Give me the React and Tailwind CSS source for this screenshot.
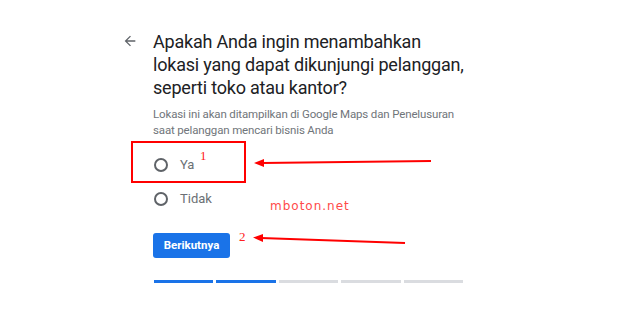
import React from 'react';

const steps = [true, true, false, false, false];

const Radio = ({ label }) => (
    <label className="flex items-center h-[34px] cursor-pointer">
        <span className="w-[14px] h-[14px] rounded-full border-2 border-[#5f6368] mr-[12px] ml-[1px]" />
        <span className="text-[13px] text-[#6b7075]">{label}</span>
    </label>
);

const App = () => {
    return (
        <div className="relative w-[640px] h-[330px] bg-white overflow-hidden" style={{ fontFamily: 'Roboto, "Liberation Sans", sans-serif' }}>
            <div className="flex pl-[122px] pt-[30px]">
                <button type="button" className="w-[31px] h-[22px] flex items-start pt-[3px] text-[#5f6368]">
                    <svg width="16" height="16" viewBox="0 0 24 24" fill="currentColor">
                        <path d="M20 11H7.83l5.59-5.59L12 4l-8 8 8 8 1.41-1.41L7.83 13H20v-2z" />
                    </svg>
                </button>
                <div className="w-[312px]">
                    <h1 className="text-[18px] leading-[23px] tracking-[-0.2px] text-[#202124] font-normal">
                        Apakah Anda ingin menambahkan lokasi yang dapat dikunjungi pelanggan, seperti toko atau kantor?
                    </h1>
                    <p className="mt-[7px] w-[312px] text-[11.5px] leading-[16px] tracking-[-0.15px] text-[#70757a]">
                        Lokasi ini akan ditampilkan di Google Maps dan Penelusuran saat pelanggan mencari bisnis Anda
                    </p>
                    <div className="mt-[10px] flex flex-col">
                        <Radio label="Ya" />
                        <Radio label="Tidak" />
                    </div>
                    <button
                        type="button"
                        className="mt-[17px] w-[77px] h-[25px] rounded-[3px] bg-[#1a73e8] text-white text-[11.5px] font-bold"
                    >
                        Berikutnya
                    </button>
                    <div className="mt-[22px] ml-[1px] flex gap-[3px] w-[309px]">
                        {steps.map((done, i) => (
                            <div key={i} className={done ? 'flex-1 h-[3px] bg-[#1a73e8]' : 'flex-1 h-[3px] bg-[#dadce0]'} />
                        ))}
                    </div>
                </div>
            </div>

            {/* annotations */}
            <div className="absolute left-[131px] top-[141px] w-[115px] h-[42px] border-2 border-[#ff0000]" />
            <span className="absolute left-[200px] top-[149px] text-[13px] leading-[14px] text-[#ff2020]" style={{ fontFamily: '"Liberation Serif", serif' }}>1</span>
            <span className="absolute left-[239px] top-[230px] text-[13px] leading-[14px] text-[#ff2020]" style={{ fontFamily: '"Liberation Serif", serif' }}>2</span>
            <span className="absolute left-[270px] top-[197px] text-[12px] tracking-[1px] text-[#ff4a4a]" style={{ fontFamily: '"DejaVu Sans", sans-serif' }}>mboton.net</span>
            <svg className="absolute left-0 top-0" width="640" height="330">
                <line x1="431" y1="161" x2="262" y2="163" stroke="#ff0000" strokeWidth="2.2" />
                <polygon points="254,163 264,159 264,167" fill="#ff0000" />
                <line x1="405" y1="243" x2="261" y2="238" stroke="#ff0000" strokeWidth="2.2" />
                <polygon points="253,237.5 263,234 263,242" fill="#ff0000" />
            </svg>
        </div>
    );
};

export default App;
